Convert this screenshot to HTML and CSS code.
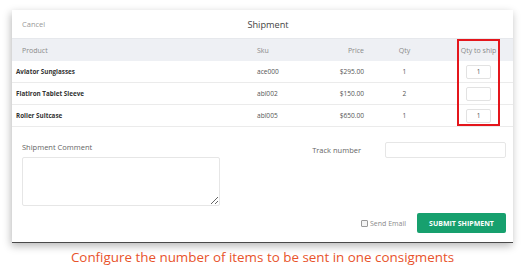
FILE: index.html
```html
<!DOCTYPE html>
<html>
<head>
	<meta charset="utf-8">
	<link rel="stylesheet" href="styles.css">
</head>
<body>
	<div class="modal">
		<div class="modal-head">
			<span class="cancel">Cancel</span>
			<span class="title">Shipment</span>
		</div>

		<div class="items">
			<table class="item-table">
				<colgroup>
					<col class="w-product">
					<col class="w-sku">
					<col class="w-price">
					<col class="w-qty">
					<col class="w-ship">
					<col class="w-end">
				</colgroup>
				<thead>
					<tr>
						<th class="c-product">Product</th>
						<th class="c-sku">Sku</th>
						<th class="c-price">Price</th>
						<th class="c-qty">Qty</th>
						<th class="c-ship">Qty to ship</th>
						<th></th>
					</tr>
				</thead>
				<tbody>
					<tr>
						<td class="c-product">Aviator Sunglasses</td>
						<td class="c-sku">ace000</td>
						<td class="c-price">$295.00</td>
						<td class="c-qty">1</td>
						<td class="c-ship"><input class="qty-input" type="text" value="1"></td>
						<td></td>
					</tr>
					<tr>
						<td class="c-product">Flatiron Tablet Sleeve</td>
						<td class="c-sku">abl002</td>
						<td class="c-price">$150.00</td>
						<td class="c-qty">2</td>
						<td class="c-ship"><input class="qty-input" type="text" value=""></td>
						<td></td>
					</tr>
					<tr>
						<td class="c-product">Roller Suitcase</td>
						<td class="c-sku">abl005</td>
						<td class="c-price">$650.00</td>
						<td class="c-qty">1</td>
						<td class="c-ship"><input class="qty-input" type="text" value="1"></td>
						<td></td>
					</tr>
				</tbody>
			</table>
			<!-- highlight around the qty to ship column -->
			<div class="highlight"></div>
		</div>

		<div class="details">
			<div class="comment">
				<label class="field-label">Shipment Comment</label>
				<textarea class="comment-box"></textarea>
			</div>
			<div class="track">
				<label class="field-label">Track number</label>
				<input class="track-input" type="text">
			</div>
		</div>

		<div class="actions">
			<label class="send-email"><span class="check"></span>Send Email</label>
			<button class="submit">SUBMIT SHIPMENT</button>
		</div>
	</div>

	<p class="caption">Configure the number of items to be sent in one consigments</p>
</body>
</html>
```

FILE: styles.css
```css
html, body {
	margin: 0;
	padding: 0;
	background: #fff;
	font-family: "Open Sans", Arial, sans-serif;
}

.modal {
	width: 501px;
	height: 233px;
	margin: 10px 0 0 12px;
	background: #fff;
	box-shadow: -1px 3px 8px rgba(0, 0, 0, 0.28);
	border-bottom: 1px solid #4a4a4a;
	box-sizing: border-box;
	display: flex;
	flex-direction: column;
}

.modal-head {
	height: 28px;
	display: flex;
	align-items: center;
	padding: 0 10px;
}
.cancel {
	font-size: 7.5px;
	color: #9a9a9a;
	width: 60px;
}
.title {
	flex: 1;
	text-align: center;
	font-size: 9.2px;
	color: #444;
	padding-right: 49px;
}

.items {
	position: relative;
}
.item-table {
	width: 501px;
	border-collapse: collapse;
	table-layout: fixed;
}
.w-product { width: 228px; }
.w-sku { width: 80px; }
.w-price { width: 48px; }
.w-qty { width: 89px; }
.w-ship { width: 43px; }
.w-end { width: 13px; }

.item-table th {
	height: 22px;
	background: #eef0f4;
	font-weight: normal;
	font-size: 7px;
	color: #8a8a8a;
	padding: 0;
	border-top: 1px solid #e6e8ec;
}
.item-table td {
	height: 21px;
	font-size: 6.6px;
	color: #555;
	padding: 0;
	border-bottom: 1px solid #ebebeb;
}
.item-table th.c-product {
	text-align: left;
	padding-left: 10px;
}
.item-table td.c-product {
	text-align: left;
	padding-left: 4px;
	font-weight: bold;
	font-size: 6.3px;
	color: #333;
}
.item-table .c-sku {
	text-align: left;
	padding-left: 17px;
}
.item-table .c-price {
	text-align: right;
	padding-right: 4px;
}
.item-table .c-qty {
	text-align: center;
	padding-right: 16px;
}
.item-table .c-ship {
	text-align: center;
}
.qty-input {
	width: 25px;
	height: 14px;
	box-sizing: border-box;
	border: 1px solid #e2e2e2;
	border-radius: 2px;
	text-align: center;
	font-family: inherit;
	font-size: 6.5px;
	color: #555;
	padding: 0;
	margin: 0;
	vertical-align: middle;
}
.highlight {
	position: absolute;
	left: 445px;
	top: 1px;
	width: 43px;
	height: 87px;
	border: 2px solid #e4161c;
	box-sizing: border-box;
}

.details {
	display: flex;
	padding: 15px 7px 0 10px;
}
.field-label {
	display: block;
	font-size: 7.5px;
	color: #666;
}
.comment {
	width: 198px;
}
.comment .field-label {
	margin-bottom: 5px;
}
.comment-box {
	display: block;
	width: 198px;
	height: 49px;
	box-sizing: border-box;
	border: 1px solid #e6e6e6;
	border-radius: 2px;
	resize: vertical;
	margin: 0;
}
.track {
	display: flex;
	align-items: center;
	margin-left: auto;
	gap: 24px;
	height: 16px;
}
.track-input {
	width: 121px;
	height: 16px;
	box-sizing: border-box;
	border: 1px solid #e6e6e6;
	border-radius: 2px;
	margin: 0;
}

.actions {
	display: flex;
	justify-content: flex-end;
	align-items: center;
	padding: 7px 7px 0 0;
	gap: 11px;
}
.send-email {
	display: flex;
	align-items: center;
	font-size: 7px;
	color: #8a8a8a;
	gap: 2px;
}
.check {
	width: 5px;
	height: 5px;
	border: 1px solid #9a9a9a;
	border-radius: 1px;
	background: #f4f4f4;
}
.submit {
	width: 89px;
	height: 20px;
	background: #17a06e;
	color: #fff;
	border: none;
	border-radius: 2px;
	font-family: inherit;
	font-weight: bold;
	font-size: 7px;
	padding: 0;
}

.caption {
	margin: 5px 0 0;
	text-align: center;
	font-size: 13.4px;
	color: #e8532b;
}
```
